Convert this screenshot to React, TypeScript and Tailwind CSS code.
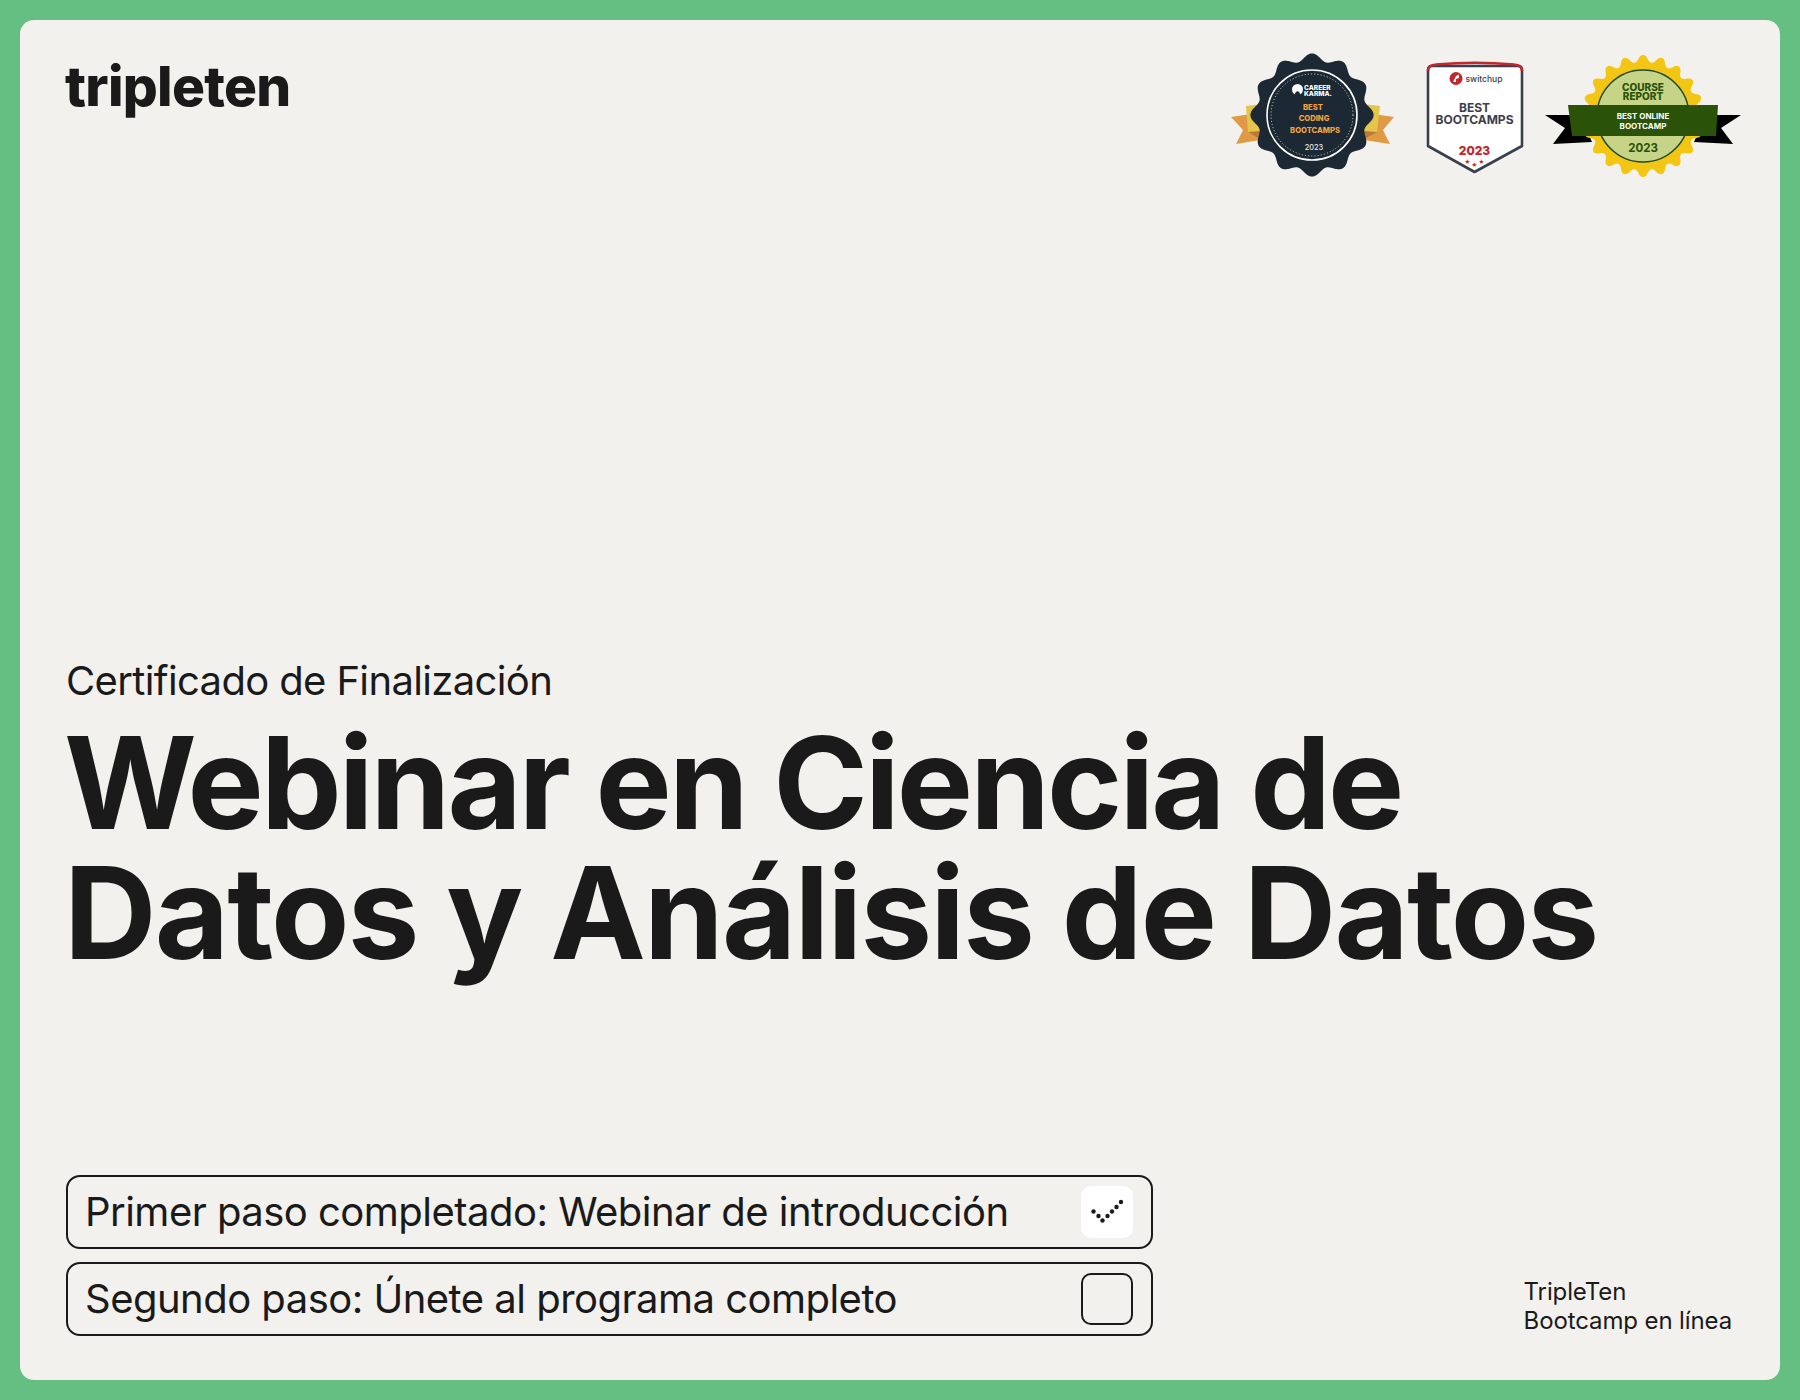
const FONT = 'Inter, "Liberation Sans", sans-serif';

// wavy or pointed outline round a centre, used by the seals
function sealPath(cx: number, cy: number, base: number, amp: number, bumps: number, sharp = false) {
  const pts: string[] = [];
  for (let i = 0; i < 720; i++) {
    const a = (i / 720) * Math.PI * 2;
    let w = Math.cos(a * bumps);
    if (sharp) w = Math.sign(w) * Math.pow(Math.abs(w), 0.8);
    const r = base + amp * w;
    pts.push(`${(cx + r * Math.sin(a)).toFixed(2)} ${(cy - r * Math.cos(a)).toFixed(2)}`);
  }
  return `M${pts.join('L')}Z`;
}

function CareerKarmaBadge() {
  return (
    <svg width="200" height="150" viewBox="0 0 200 150" style={{ fontFamily: FONT }}>
      <path d="M21 77 L48 73 L50 100 L26 104 L33 90 Z" fill="#e09a45" />
      <path d="M184 77 L156 73 L154 100 L180 104 L173 90 Z" fill="#e09a45" />
      <path d="M36 66 L60 63 L60 91 L38 92 Z" fill="#e5c44b" />
      <path d="M170 66 L144 63 L144 91 L167 92 Z" fill="#e5c44b" />
      <path d="M38 92 L52 91 L50 99 Z" fill="#b9793a" />
      <path d="M167 92 L152 91 L154 99 Z" fill="#b9793a" />
      <path d={sealPath(102, 75, 58, 3.6, 12)} fill="#1c2833" />
      <circle cx="102" cy="75" r="45" fill="none" stroke="#fff" strokeWidth="1.6" />
      <circle cx="102" cy="75" r="41" fill="none" stroke="#fff" strokeWidth="0.9" strokeDasharray="1 2.2" opacity="0.9" />
      <circle cx="87.5" cy="49.5" r="5.5" fill="#fff" />
      <path d="M84 55.5 Q87.5 47 91 55.5 Z" fill="#1c2833" />
      <text x="94" y="49.5" fontSize="6.6" fontWeight="800" fill="#fff">CAREER</text>
      <text x="94" y="55.5" fontSize="6.6" fontWeight="800" fill="#fff">KARMA.</text>
      <text x="103" y="69.5" fontSize="7.6" fontWeight="800" fill="#f2a33c" textAnchor="middle">BEST</text>
      <text x="104" y="81" fontSize="7.6" fontWeight="800" fill="#f2a33c" textAnchor="middle">CODING</text>
      <text x="105" y="93" fontSize="7.6" fontWeight="800" fill="#f2a33c" textAnchor="middle">BOOTCAMPS</text>
      <text x="104" y="109.5" fontSize="7.4" fontWeight="500" fill="#e8e8e8" textAnchor="middle">2023</text>
    </svg>
  );
}

function SwitchupBadge() {
  return (
    <svg width="120" height="150" viewBox="0 0 120 150" style={{ fontFamily: FONT }}>
      <path d="M18 30 Q18 26 22 26 L108 26 Q112 26 112 30 L112 106 L64.5 132 L18 106 Z" fill="#fff" stroke="#3a3f4d" strokeWidth="2.6" strokeLinejoin="round" />
      <path d="M18 31 Q18 25 26 24.5 Q65 21 104 24.5 Q112 25 112 31" fill="none" stroke="#c1272d" strokeWidth="2.6" />
      <circle cx="46" cy="38.5" r="6.5" fill="#c1272d" />
      <path d="M43 42 L46 36 L49 34.5 L49 38 L46 39 L46 42 Z" fill="#fff" />
      <text x="55.5" y="41.5" fontSize="8.5" fontWeight="500" fill="#3a3f4d">switchup</text>
      <text x="64.5" y="72" fontSize="12" fontWeight="700" fill="#3a3f4d" textAnchor="middle">BEST</text>
      <text x="64.5" y="84" fontSize="12" fontWeight="700" fill="#3a3f4d" textAnchor="middle">BOOTCAMPS</text>
      <text x="64.5" y="115" fontSize="12" fontWeight="800" fill="#c8202d" textAnchor="middle">2023</text>
      <text x="57.5" y="124" fontSize="6" fill="#c8202d" textAnchor="middle">★</text>
      <text x="64.5" y="127" fontSize="6" fill="#c8202d" textAnchor="middle">★</text>
      <text x="71.5" y="124" fontSize="6" fill="#c8202d" textAnchor="middle">★</text>
    </svg>
  );
}

function CourseReportBadge() {
  return (
    <svg width="220" height="150" viewBox="0 0 220 150" style={{ fontFamily: FONT }}>
      <path d="M15 75 L50 75 L62 102 L23 104 L35 88 Z" fill="#000" />
      <path d="M211 75 L176 75 L164 102 L203 104 L191 88 Z" fill="#000" />
      <path d={sealPath(113, 76, 57.5, 3.6, 20, true)} fill="#f3c614" />
      <circle cx="113" cy="76" r="46" fill="#c5d486" stroke="#1f4a2c" strokeWidth="1.5" />
      <path d="M38 65 L188 65 L186 96 L42 96 Z" fill="#2a5208" />
      <text x="113" y="51" fontSize="10" fontWeight="800" fill="#2a5208" textAnchor="middle">COURSE</text>
      <text x="113" y="60" fontSize="10" fontWeight="800" fill="#2a5208" textAnchor="middle">REPORT</text>
      <text x="113" y="79" fontSize="8" fontWeight="700" fill="#fff" textAnchor="middle">BEST ONLINE</text>
      <text x="113" y="89" fontSize="8" fontWeight="700" fill="#fff" textAnchor="middle">BOOTCAMP</text>
      <text x="113" y="112" fontSize="11.5" fontWeight="700" fill="#2a5208" textAnchor="middle">2023</text>
    </svg>
  );
}

function Step({ label, done }: { label: string; done?: boolean }) {
  return (
    <div className="flex h-[74px] w-[1087px] items-center justify-between rounded-[14px] border-2 border-[#1a1a1a] pl-[17px] pr-[18px]">
      <span className="text-[40px] leading-none tracking-[-0.013em] text-[#1a1a1a]">{label}</span>
      {done ? (
        <div className="flex h-[52px] w-[52px] items-center justify-center rounded-[10px] bg-white">
          <svg width="52" height="52" viewBox="0 0 52 52" fill="#1a1a1a">
            <circle cx="12.5" cy="25.5" r="2.2" />
            <circle cx="17.5" cy="30" r="2.2" />
            <circle cx="21.5" cy="34.5" r="2.2" />
            <circle cx="26.5" cy="30" r="2.2" />
            <circle cx="31" cy="25.5" r="2.2" />
            <circle cx="35.5" cy="21" r="2.2" />
            <circle cx="40" cy="16" r="2.2" />
          </svg>
        </div>
      ) : (
        <div className="h-[52px] w-[52px] rounded-[10px] border-2 border-[#1a1a1a]" />
      )}
    </div>
  );
}

export default function App() {
  return (
    <div className="h-[1400px] w-[1800px] bg-[#65bf82] p-5" style={{ fontFamily: FONT }}>
      <div className="flex h-full flex-col rounded-[14px] bg-[#f2f1ee] pb-[44px] pl-[46px] pr-[30px] pt-5 text-[#1a1a1a]">
        <header className="flex items-start justify-between">
          <div className="-ml-[1px] mt-[19px] text-[55px] font-extrabold leading-none tracking-[-0.013em]">tripleten</div>
          <div className="flex">
            <CareerKarmaBadge />
            <SwitchupBadge />
            <CourseReportBadge />
          </div>
        </header>

        <section className="mt-[467px]">
          <p className="text-[40px] leading-[48px] tracking-[-0.016em]">Certificado de Finalización</p>
          <h1 className="-ml-[2px] mt-[13px] text-[128px] font-bold leading-[130px]">
            <span className="tracking-[-0.0224em]">Webinar en Ciencia de</span>
            <br />
            <span className="tracking-[-0.0137em]">Datos y Análisis de Datos</span>
          </h1>
        </section>

        <footer className="mt-auto flex items-end justify-between">
          <div className="flex flex-col gap-[13px]">
            <Step label="Primer paso completado: Webinar de introducción" done />
            <Step label="Segundo paso: Únete al programa completo" />
          </div>
          <p className="mb-[1px] mr-[18px] text-[24px] leading-[29px] tracking-[-0.005em]">
            TripleTen
            <br />
            Bootcamp en línea
          </p>
        </footer>
      </div>
    </div>
  );
}
